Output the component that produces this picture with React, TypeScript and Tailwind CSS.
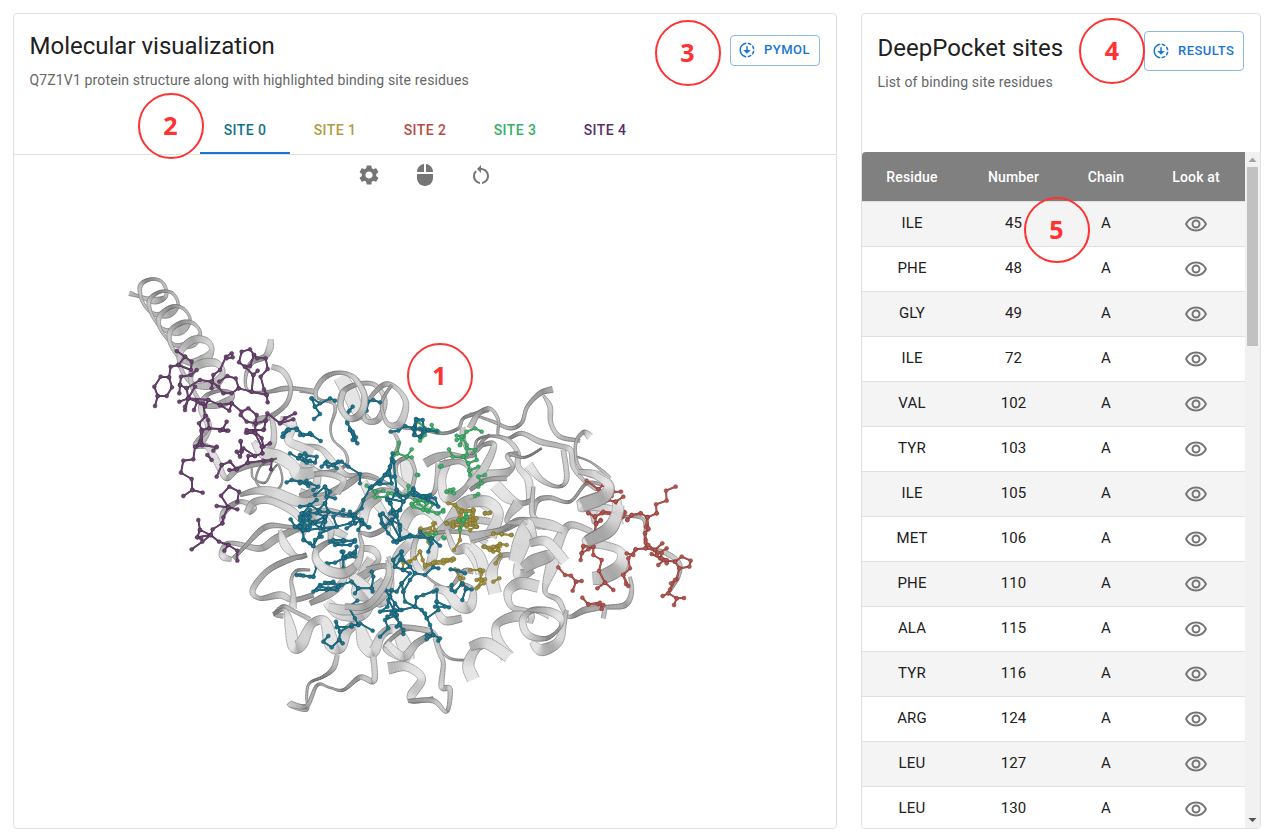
import React from "react";
import { MdSettings, MdMouse, MdRestartAlt, MdDownloading, MdOutlineRemoveRedEye } from "react-icons/md";

/* ---------- molecule data: coordinates are in thirds of a pixel from each tile's origin ---------- */
type Tile = { ox: number; oy: number; items: string[] };

// each item: "x y width, x y width, ..."
const ribbonTiles: Tile[] = [
  { ox: 300, oy: 340, items: [
    "120 110 40, 150 160 46, 175 215 34, 210 240 14",
    "0 150 14, 40 160 6, 60 178 5, 100 190 8, 105 215 8, 92 260 5, 100 300 5, 135 335 6, 140 372 8, 100 392 8, 50 390 8, 0 340 14",
    "50 180 8, 48 150 12, 75 112 14, 120 98 10, 165 115 14, 193 165 16, 185 220 20, 150 236 16, 122 200 16, 130 155 16, 175 132 12, 225 135 12, 254 180 14, 235 238 18, 195 240 12, 200 190 10, 250 135 14, 290 145 12, 318 190 16, 300 250 22, 262 250 12, 245 190 8, 275 135 8",
    "310 262 10, 370 270 8, 430 280 8, 475 265 8, 490 235 8, 530 220 10, 565 208 14",
    "280 275 8, 296 310 10, 280 350 8",
    "320 360 40, 325 400 42, 325 440 20, 290 410 14, 290 370 12, 325 355 10, 345 395 10, 335 450 12",
    "375 370 26, 410 352 24, 450 343 14, 490 350 12, 525 345 10",
    "415 370 14, 410 430 14, 395 465 10, 350 480 8, 310 450 8",
    "445 360 22, 425 420 24, 440 475 28, 490 450 16, 515 400 10, 480 365 14, 420 375 20",
    "488 262 14, 490 300 14, 515 340 8, 550 300 8, 570 285 8",
    "0 320 14, 60 325 14, 105 375 22, 140 405 14, 190 408 12, 250 425 10, 300 460 12",
    "0 455 20, 60 470 20, 130 440 22, 190 405 12, 235 415 8",
    "190 425 22, 215 470 30, 250 520 22, 262 575 22",
    "0 530 24, 80 515 22, 160 525 12, 200 475 14, 250 450 14, 330 470 10, 400 480 12",
    "190 550 22, 200 500 30, 240 470 20",
    "300 580 30, 330 520 34, 375 510 26, 420 550 22, 430 600 24",
    "430 580 30, 480 500 34, 530 480 34, 570 500 34",
    "400 600 24, 450 550 26, 520 540 20, 570 545 20",
    "0 370 14, 50 400 20, 40 450 22, 0 470 16",
    "0 415 12, 70 400 16, 130 420 18, 110 460 20",
    "0 580 30, 30 530 30, 80 560 26, 140 590 18",
  ]},
  { ox: 120, oy: 260, items: [
    "452 238 14, 450 262 20, 435 290 16, 395 308 14, 377 350 8, 385 392 6, 440 396 8, 490 386 14, 530 386 10, 580 394 14",
    "455 320 14, 490 335 16, 512 380 12, 500 430 12, 455 468 14, 415 482 22, 400 500 8",
    "455 470 12, 462 520 16, 455 560 18, 420 590 16",
    "480 480 20, 515 492 30, 505 540 24, 540 560 26, 580 575 24",
    "28 100 14, 60 110 8, 105 122 20, 138 108 10, 130 70 8, 98 57 8, 62 75 12, 66 122 8, 98 160 10, 145 162 22, 174 135 8, 158 100 8, 122 95 8, 88 120 12, 96 165 8, 130 208 10, 180 212 26, 210 180 8, 190 146 8, 155 140 10, 118 170 14, 124 212 8, 165 255 10, 215 250 26, 241 220 8, 220 190 10, 185 188 12, 150 215 14, 155 260 10, 195 305 12, 250 300 30, 275 270 14, 260 243 18, 220 240 22, 182 275 18, 185 330 10, 225 375 14, 285 370 28, 308 335 14, 285 308 22, 235 315 24, 212 350 14, 225 400 10, 260 438 12, 320 425 22, 338 400 8, 300 392 8, 255 410 12, 245 450 18, 266 500 18, 245 550 16",
  ]},
  { ox: 120, oy: 430, items: [
    "262 0 12, 225 45 12, 262 50 16, 288 90 20, 318 145 14, 350 120 16, 400 105 12, 450 100 8",
    "400 35 14, 430 68 34, 480 82 38, 520 110 34, 535 132 38, 580 128 32",
    "395 115 4, 400 145 4, 435 158 5, 455 125 4, 475 105 4, 487 150 4, 470 180 6, 430 178 5, 408 150 4, 425 105 4, 470 85 4",
    "305 275 12, 315 242 18, 360 215 12, 400 232 18, 385 250 12",
    "360 195 10, 410 182 20, 460 187 30, 510 207 32, 550 217 28, 610 210 26",
    "380 250 16, 400 218 20, 450 212 20, 520 245 22, 558 290 16",
    "335 388 12, 308 378 20, 315 345 12, 345 340 12, 420 355 18, 470 325 22, 545 290 16",
    "340 385 12, 370 355 10, 435 292 16, 500 290 10, 570 300 12",
    "480 300 10, 495 345 26, 530 380 14, 560 375 14",
    "560 375 8, 500 392 16, 440 425 16, 398 480 16, 420 505 12, 480 495 20, 520 510 14, 580 495 14",
    "570 420 6, 530 422 8, 514 450 8, 520 495 14, 518 535 22",
    "570 568 12, 525 545 10, 490 530 12, 464 553 8, 490 558 14",
  ]},
  { ox: 230, oy: 560, items: [
    "240 130 14, 300 100 22, 340 60 20, 335 0 12",
    "290 125 26, 330 160 36, 400 165 26, 430 100 30",
    "130 162 10, 165 150 10, 180 200 30, 192 258 36, 215 250 36, 245 192 24, 285 185 30, 305 250 44, 330 260 36, 350 215 30, 385 195 24, 405 250 44, 430 275 34, 455 225 24, 495 208 28, 525 260 42, 540 300 26",
    "322 285 12, 310 325 14, 280 350 8, 238 370 6, 230 410 6, 230 450 8, 180 432 18, 230 438 12, 262 375 8, 300 383 5, 340 390 8, 390 352 14, 432 362 16, 430 290 16",
    "540 300 18, 500 285 24, 465 260 12, 520 210 12, 570 208 14, 610 220 10",
    "475 325 34, 530 320 26, 575 355 24, 545 405 26, 550 425 10, 610 416 12",
    "430 0 40, 400 50 40, 380 100 30, 420 100 40, 460 60 20",
    "345 140 16, 400 140 20, 440 110 18, 475 50 18, 475 0 14",
  ]},
  { ox: 300, oy: 510, items: [
    "0 60 24, 50 20 30, 90 50 22, 90 95 12",
    "185 115 16, 220 120 20, 235 150 14, 200 190 22, 150 215 20",
    "150 190 20, 200 235 30, 240 280 24, 270 230 22, 260 170 14, 200 180 18",
    "270 180 16, 300 130 30, 330 90 24, 300 60 20",
    "50 110 14, 48 150 22, 80 180 28, 130 190 30, 170 165 22, 186 110 12, 180 70 8, 215 74 14, 260 48 12, 275 0 10",
    "50 120 20, 90 95 12, 130 105 10",
    "85 290 22, 130 300 30, 200 295 20, 255 250 18, 275 180 14, 265 140 10",
    "360 185 22, 340 140 16, 350 85 14, 385 60 12, 400 100 26, 395 150 26, 375 185 12",
    "400 70 10, 450 65 10, 510 70 14, 560 100 18",
    "440 60 12, 465 120 20, 500 115 30, 530 150 34, 545 190 34",
    "370 190 5, 410 222 6, 450 232 8, 490 185 14, 520 185 14",
    "400 235 20, 440 245 26, 475 285 34, 510 290 30, 518 240 16, 480 220 10",
    "410 300 16, 435 332 24, 485 325 20",
    "300 350 12, 350 355 14, 400 370 16, 420 415 8, 450 445 6, 500 450 6, 520 440 14",
    "520 508 38, 505 465 34, 530 415 24, 575 395 20",
    "405 385 12, 420 430 14, 430 462 12, 425 530 16, 450 538 14, 440 605 10, 400 572 14, 325 573 10",
    "260 400 20, 310 440 26, 350 400 20, 400 370 14",
  ]},
  { ox: 470, oy: 370, items: [
    "248 58 18, 210 70 14, 172 110 10, 155 158 10, 120 175 10, 70 155 8, 0 130 4",
    "220 76 6, 240 110 14, 243 160 12, 270 200 12, 330 212 10",
    "0 175 18, 25 132 14, 60 116 10, 85 150 8, 85 195 6, 115 205 8, 155 190 12, 210 215 16, 270 228 14, 303 242 16, 310 290 14, 340 330 10, 380 360 8",
    "360 200 22, 340 187 12, 317 220 8, 322 280 8, 350 312 10, 400 325 8",
    "320 260 4, 360 275 4, 400 305 8, 420 325 10",
    "15 245 8, 22 210 6, 60 198 6, 110 208 12, 142 245 14, 145 290 16, 175 330 22, 180 392 20",
    "145 250 10, 112 258 12, 128 292 12, 85 315 32, 10 310 24",
    "0 350 30, 45 290 24, 72 225 16, 40 225 10, 20 245 8",
    "175 285 28, 215 330 16, 265 350 8, 290 325 14, 280 240 14",
    "75 345 36, 110 380 34, 150 400 16, 185 392 14",
    "120 252 8, 165 262 6, 215 235 5",
    "188 450 10, 200 395 14, 240 383 12, 300 395 8, 350 340 8, 400 345 8",
    "190 350 10, 187 430 14, 210 468 18, 160 452 20, 100 480 14, 0 510 26",
    "0 400 24, 50 395 34, 85 430 30, 60 500 38",
    "0 360 10, 50 330 12, 110 325 14",
  ]},
  { ox: 470, oy: 510, items: [
    "450 20 6, 520 28 8, 530 105 6, 590 130 14, 628 160 12, 625 200 10, 600 240 10",
    "185 -20 14, 190 20 14, 225 50 18, 150 30 16, 90 60 14, 0 80 26",
    "480 200 8, 485 245 12, 465 285 16, 405 292 12, 345 300 18, 295 320 10, 265 270 16, 225 245 12, 245 170 36, 265 95 30, 300 45 20, 365 65 16",
    "0 105 20, 30 140 30, 45 195 34",
    "75 250 38, 65 190 34, 90 140 16, 130 135 12",
    "150 160 34, 150 195 34, 190 180 18",
    "145 -20 34, 110 35 10, 180 35 24, 240 45 30, 280 60 20",
    "135 155 38, 155 95 50, 175 40 30, 200 100 10",
    "160 175 30, 190 155 40, 240 135 34, 250 110 10",
    "180 100 20, 230 95 28, 285 155 30",
    "205 230 34, 150 220 34, 115 245 26, 125 290 16, 180 310 20, 180 340 14",
    "112 440 42, 85 395 30, 80 345 22, 130 320 30, 170 320 30",
    "405 295 12, 400 325 12",
    "185 395 16, 215 420 34, 265 395 26, 280 340 18, 290 300 10",
    "240 310 34, 190 300 16, 158 330 20, 175 375 20, 230 385 12, 272 350 8, 268 320 24, 230 302 20, 180 300 10",
    "0 410 24, 50 400 34, 115 440 34",
    "370 -15 30, 372 40 10",
    "440 -30 26, 440 15 32, 415 60 42, 350 95 30, 400 105 24, 452 125 24, 450 170 42, 400 200 42, 368 205 36",
  ]},
  { ox: 470, oy: 370, items: [
    "325 305 14, 380 315 24, 418 345 26, 400 380 40, 336 405 40, 380 410 24, 430 425 28, 440 465 40",
  ]},
];

// each item: chain of atoms "x y x y ..."; every vertex is an atom
type Mol = { color: string; dark: string; tiles: Tile[] };
const purple: Mol = { color: "#6b4270", dark: "#452a4b", tiles: [
  { ox: 120, oy: 260, items: [
    "105 438 113 408 103 380 122 350 147 352 156 382 140 408 113 408", "147 352 152 320 175 315 195 290 170 273", "175 315 213 330 215 305 195 290",
    "180 375 183 350 213 345 230 330", "178 400 180 375 200 385 240 360 275 365", "275 385 280 345 300 330 318 290 335 280 338 292 320 295",
    "275 365 295 380 310 400 335 400 356 385 347 355 322 348 298 365", "356 385 395 395 440 405 443 427", "395 395 400 345 375 320 357 307 365 275 390 268 402 285 390 318 375 320", "402 285 412 295 437 295 443 327 422 350 432 388 440 405", "400 345 413 332",
    "195 450 205 415 178 425", "205 415 200 385", "205 415 232 425 222 450", "195 440 205 415 225 380", "205 415 265 420 300 435 335 430 365 455 385 445 410 465 407 490 380 485 362 465", "300 435 328 452 335 430",
    "265 420 255 440 242 430", "258 468 237 490 245 510 267 505 264 480", "267 505 308 508 320 485", "308 508 320 512", "245 510 240 545 228 560", "255 468 250 430",
    "407 490 405 515 382 518", "405 515 425 535 430 560 450 550", "407 490 437 482 432 508", "437 482 442 460 480 490 495 475 525 460", "480 490 520 478", "362 545 365 570", "290 560 280 572",
  ]},
  { ox: 120, oy: 430, items: [
    "245 5 247 45 225 50 220 88 190 92 183 128 215 147 217 180 190 198", "217 180 248 188", "247 45 290 52", "300 2 325 2", "378 8 405 10 425 50 427 70", "380 0 430 0",
    "362 33 365 65 350 65 360 80 370 55 405 78 427 70", "328 120 350 118 383 98 385 78 405 78", "305 105 330 95 350 118", "290 140 305 105", "275 90 262 75", "383 98 430 92 455 90 453 118",
    "352 215 357 185 328 170 303 197 325 232 352 238", "325 232 310 262 307 280", "325 232 290 228", "307 280 278 298 272 315 240 300 235 270", "240 300 232 322 272 315 247 335 215 358", "272 315 297 335 325 345 352 362 352 392", "325 345 313 362", "232 322 243 325",
  ]},
]};
const teal: Mol = { color: "#20748c", dark: "#0f4c60", tiles: [
  { ox: 300, oy: 340, items: [
    "35 175 45 200 60 222 42 237", "35 175 60 190", "45 200 90 175 105 182", "142 220 158 200 148 212", "200 212 205 185 220 180 240 187", "142 245 150 270 165 300 172 310", "150 270 160 282 158 300", "142 250 158 275 168 292", "0 285 35 285 62 303",
    "272 275 295 272 315 258 340 265 362 268 385 270", "340 265 348 237 368 240 372 268 360 290 342 285 340 265", "360 290 385 270 410 275", "350 240 345 285",
    "0 345 15 360 45 368 50 350 20 348", "65 380 80 365 100 375 125 365 145 380 180 402 180 430", "100 375 110 385", "75 370 85 380 115 365",
    "0 425 30 430 55 440 40 450", "0 430 20 422", "45 465 75 440 80 470 105 475", "75 440 90 455 75 490 55 510 30 495 10 520 40 550 75 545 85 515 75 490", "0 500 30 495 50 480", "0 560 40 550 70 570 75 545", "20 570 10 520", "60 515 85 515 130 525 160 525 185 505 190 480 210 445", "150 515 165 550 185 540 160 525", "165 550 140 565", "185 540 205 562",
    "278 340 270 380 255 405 235 430 215 440", "278 360 268 400 275 430 240 432 255 405 270 380", "282 365 285 410 290 450 270 490 262 475 310 485 340 450 370 470 405 475 415 500 385 480 340 465", "215 440 255 405 275 410", "290 450 300 470 310 485 300 510 280 515 272 490 262 480", "300 510 275 540 300 555 300 570", "340 445 320 470 295 465", "240 525 245 550", "255 560 275 540", "340 450 345 465 390 465",
  ]},
  { ox: 120, oy: 260, items: ["490 530 505 508 530 505 550 525 570 520", "490 520 500 512"] },
  { ox: 120, oy: 430, items: ["487 20 507 0", "530 0 550 15 570 10", "510 70 535 85 555 70", "535 85 560 98 570 92", "500 157 515 150 545 157 565 168", "512 268 525 290 548 302 552 330 570 340", "548 302 550 265 570 275", "545 250 570 260", "525 290 545 280 570 290", "530 435 550 437 570 440"] },
  { ox: 300, oy: 510, items: [
    "0 20 25 10 30 0", "0 50 25 60 60 55 75 20 50 10 25 10", "0 30 45 35 75 20", "10 60 10 90 40 108 45 90 65 80", "40 108 60 70 110 50 100 20 130 0", "60 55 110 50 150 40 165 25 145 15", "165 15 185 42 208 52", "185 42 175 60",
    "90 95 110 100 130 95 165 90", "100 90 130 90 165 95 150 105 105 105", "125 125 135 145 165 130 170 110", "130 140 150 130 165 125", "130 125 130 175", "80 160 105 158 130 145 165 140", "40 200 50 170 85 162", "0 195 40 200",
    "40 245 60 225 85 220 120 225 155 215 175 235 215 235 220 200 215 185", "50 240 80 240 110 240 125 225", "60 230 85 235 115 230 100 215 75 218", "175 235 165 250", "215 235 218 245",
    "145 290 172 272", "145 290 165 325 175 345", "155 350 110 352 108 335 120 365 118 390 95 412 70 395 85 378", "118 390 128 400", "120 365 155 345 175 345", "218 362 180 340",
    "242 15 250 45 265 70 290 97 300 85 275 40 248 10", "270 10 290 20 300 50 300 85 330 75 360 80", "270 40 290 15 278 0", "300 85 280 95", "290 97 330 80 395 85", "360 65 395 100 385 125", "395 85 420 107", "280 150 305 125 310 150 330 170 345 190 375 195 400 172 415 175", "280 150 285 170 310 180 330 170", "310 180 330 190 305 220 310 245 330 210 345 190", "305 125 300 150 285 170",
    "255 240 270 260 262 290 240 305 285 300 305 300 345 290 350 262 410 240 410 275 415 300 380 325 365 300 345 290", "275 240 265 270 290 315 255 330 265 355 240 380", "290 315 298 345 310 360 310 372", "285 280 275 310 300 340 290 350 298 345", "305 220 290 245 255 240", "310 245 315 275 345 290", "270 260 300 300 262 320", "350 262 370 255 400 245", "410 275 447 292", "375 310 390 345 400 375 380 388", "380 375 400 375 420 385 415 392", "405 290 435 290",
    "452 178 475 182 495 190", "455 225 455 240 465 245 487 220", "487 270 497 238 515 238", "487 220 500 235",
  ]},
]};
const green: Mol = { color: "#43b06c", dark: "#287a48", tiles: [
  { ox: 300, oy: 340, items: [
    "355 245 375 265 395 270 410 272", "360 302 375 285 360 265", "395 255 400 270 415 275", "297 308 292 340 275 355", "292 340 320 350 335 328", "320 350 335 352", "355 405 350 405", "420 380 425 378",
    "470 287 490 290 500 275 525 265 545 275", "480 315 490 290 470 300", "480 315 485 290 500 315 500 345 490 350 505 370 530 360 525 330 500 325", "447 328 458 350 490 350", "505 370 508 392 535 380", "508 392 510 405", "555 405 535 410 545 430 535 440", "525 468 535 462", "440 455 462 460 450 450", "440 455 460 448",
    "200 437 225 455 225 472 260 470 265 460 285 465", "225 455 250 452", "275 460 300 465 325 465 325 438", "335 492 360 480 380 490 370 510 340 500 335 492", "345 480 370 480 400 492 385 515", "355 490 380 510 415 520 430 510", "475 540 490 545 500 530 480 570", "330 460 370 470 380 490",
  ]},
  { ox: 300, oy: 510, items: ["380 0 410 10 430 5", "390 100 408 70 380 75", "433 85 430 82", "490 30 498 12"] },
]};
const olive: Mol = { color: "#a09243", dark: "#706526", tiles: [
  { ox: 300, oy: 340, items: [
    "445 490 465 495 485 510 520 510 515 535 485 540 485 515", "440 550 460 545 485 550 520 550 530 560", "460 560 470 545 500 560 525 540", "465 495 485 540", "360 568 390 565 405 550", "555 520 570 518",
  ]},
  { ox: 300, oy: 510, items: [
    "362 55 365 75 405 60 400 40", "365 75 390 75 385 95", "440 40 470 35 485 5 520 5 520 30 490 30 480 55 480 90 462 120", "440 40 460 50 500 45 530 50", "485 45 530 25", "360 125 368 150 375 170 400 162 430 160 455 152", "375 165 405 155 440 150 462 148", "400 158 430 150 460 145", "308 178 310 158 330 155", "360 125 345 145 325 155", "465 178 480 205 490 205", "480 205 485 225", "550 110 565 115",
  ]},
  { ox: 470, oy: 370, items: ["45 430 60 428", "70 490 95 493 125 495", "0 460 20 470 5 445 10 420"] },
  { ox: 470, oy: 510, items: ["0 30 18 50 0 60", "0 20 10 0 15 40", "45 10 55 10", "70 72 95 72 123 75", "45 110 70 110 90 102 110 105", "45 110 70 125 85 120 90 102", "60 120 90 108", "85 120 92 135 77 160", "70 215 88 205", "0 180 30 180 40 182 30 208 42 220 25 230", "30 180 35 210 20 235", "20 210 45 208"] },
]};
const red: Mol = { color: "#b5544e", dark: "#7d3632", tiles: [
  { ox: 470, oy: 370, items: [
    "350 332 385 358 400 345", "385 358 425 378 430 365 453 365", "415 390 437 395 460 380", "437 395 440 415 445 430 462 425 457 442 445 435", "440 425 455 435 465 428", "355 430 375 440 378 460 392 450", "378 460 375 488", "375 440 395 430 425 432", "472 450 485 435 512 430 532 442 560 430 558 403 590 392 588 362 617 350", "532 442 535 478 525 490 527 510", "532 442 528 470",
  ]},
  { ox: 470, oy: 510, items: [
    "355 8 375 20 378 42 392 32", "378 42 372 75 370 110 370 135 395 150 387 183 405 218 382 235", "405 218 430 240", "375 20 400 5 440 10 460 15 445 5", "472 30 485 15 512 10 532 22 560 10", "532 22 535 55 525 70 527 98 527 115 555 120 577 100", "535 105 555 120 560 135 590 115", "555 120 575 130 572 145 545 132", "527 115 497 118 490 135 470 130", "497 118 475 145 480 175 460 195 468 222", "460 195 475 228",
    "340 110 335 130 332 150", "335 130 355 118 370 110", "340 108 370 110", "265 172 285 195 303 197 318 215 335 213", "318 215 308 242", "337 263 355 283 385 282 400 285", "355 283 390 278 395 297",
    "565 165 582 150 590 155 570 145", "582 150 615 155 635 140 662 152 658 170 628 175 615 155", "628 175 620 208 603 220 615 210 600 240 595 250 578 258", "595 250 620 265 642 264", "620 265 612 285", "575 145 590 150 590 160",
  ]},
]};
const molecules = [purple, olive, green, teal, red];

/* ---------- ribbon geometry ---------- */
type P = [number, number, number];
const STEPS = 8;

function sample(item: string, ox: number, oy: number): P[] {
  const pts = item.split(",").map((s) => {
    const [x, y, w] = s.trim().split(" ").map(Number);
    return [ox + x / 3, oy + y / 3, w / 3] as P;
  });
  const out: P[] = [];
  for (let i = 0; i < pts.length - 1; i++) {
    const a = pts[Math.max(0, i - 1)], b = pts[i], c = pts[i + 1], d = pts[Math.min(pts.length - 1, i + 2)];
    for (let s = 0; s < STEPS; s++) {
      const t = s / STEPS;
      const q = [0, 1, 2].map((k) =>
        0.5 * (2 * b[k] + (c[k] - a[k]) * t + (2 * a[k] - 5 * b[k] + 4 * c[k] - d[k]) * t * t + (3 * b[k] - a[k] - 3 * c[k] + d[k]) * t * t * t));
      out.push([q[0], q[1], Math.max(1.1, q[2])]);
    }
  }
  out.push(pts[pts.length - 1]);
  return out;
}

function Ribbon({ item, ox, oy }: { item: string; ox: number; oy: number }) {
  const p = sample(item, ox, oy);
  const edge = p.map((q, i) => {
    const a = p[Math.max(0, i - 1)], b = p[Math.min(p.length - 1, i + 1)];
    const dx = b[0] - a[0], dy = b[1] - a[1], len = Math.hypot(dx, dy) || 1;
    const nx = (-dy / len) * q[2] / 2, ny = (dx / len) * q[2] / 2;
    // surfaces running down-right or straight down face the light; edge-on stretches go dark
    const light = Math.abs((dx / len) * 0.45 + (dy / len) * 0.89);
    const v = Math.round(Math.min(228, 104 + 62 * Math.min(1, q[2] / 8) + 68 * light));
    return { l: [q[0] + nx, q[1] + ny], r: [q[0] - nx, q[1] - ny], v };
  });
  const f = (n: number[]) => n[0].toFixed(1) + " " + n[1].toFixed(1);
  return (
    <g>
      {edge.slice(1).map((e, i) => {
        const o = edge[i];
        const c = `rgb(${e.v},${e.v},${e.v})`;
        const k = Math.round(e.v * 0.58);
        return (
          <g key={i}>
            <path d={`M${f(o.l)}L${f(e.l)}L${f(e.r)}L${f(o.r)}Z`} fill={c} stroke={c} strokeWidth={0.5} />
            <path d={`M${f(o.l)}L${f(e.l)}M${f(o.r)}L${f(e.r)}`} stroke={`rgb(${k},${k},${k})`} strokeWidth={0.6} fill="none" />
          </g>
        );
      })}
    </g>
  );
}

function Molecule({ mol }: { mol: Mol }) {
  const bonds: string[] = [];
  const atoms: [number, number][] = [];
  mol.tiles.forEach((t) => t.items.forEach((s) => {
    const n = s.split(" ").map(Number);
    let d = "";
    for (let i = 0; i < n.length; i += 2) {
      const x = t.ox + n[i] / 3, y = t.oy + n[i + 1] / 3;
      d += (i ? "L" : "M") + x.toFixed(1) + " " + y.toFixed(1);
      atoms.push([x, y]);
    }
    bonds.push(d);
  }));
  const all = bonds.join("");
  return (
    <g fill="none" strokeLinejoin="round">
      <path d={all} stroke={mol.dark} strokeWidth={1.9} />
      <path d={all} stroke={mol.color} strokeWidth={1.3} />
      {atoms.map(([x, y], i) => (
        <circle key={i} cx={x} cy={y} r={1.95} fill={mol.color} stroke={mol.dark} strokeWidth={0.5} />
      ))}
    </g>
  );
}

function Protein() {
  return (
    <svg className="block" width="640" height="460" viewBox="100 260 640 460">
      {ribbonTiles.map((t, k) => (
        <g key={k}>{t.items.map((s, i) => <Ribbon key={i} item={s} ox={t.ox} oy={t.oy} />)}</g>
      ))}
      {molecules.map((m, i) => <Molecule key={i} mol={m} />)}
      <Ribbon item="345 140 16, 400 140 20, 440 110 18, 475 50 18, 475 10 14" ox={230} oy={560} />
      <Ribbon item="48 120 14, 50 150 22, 80 180 28, 130 190 28, 165 168 20" ox={300} oy={510} />
      <Ribbon item="165 115 14, 193 165 16, 185 215 20, 150 236 16, 122 200 16, 130 155 16" ox={300} oy={340} />
      <Ribbon item="375 315 20, 416 345 26, 400 380 40, 336 405 40" ox={470} oy={370} />
      <Ribbon item="445 -15 34, 440 15 34, 415 60 42, 350 95 32" ox={470} oy={510} />
    </svg>
  );
}

/* ---------- page ---------- */
const tabs = [
  ["SITE 0", "text-[#12718a]"],
  ["SITE 1", "text-[#ae9b45]"],
  ["SITE 2", "text-[#b84a43]"],
  ["SITE 3", "text-[#35b265]"],
  ["SITE 4", "text-[#57306b]"],
];
const rows: [string, number][] = [
  ["ILE", 45], ["PHE", 48], ["GLY", 49], ["ILE", 72], ["VAL", 102], ["TYR", 103], ["ILE", 105],
  ["MET", 106], ["PHE", 110], ["ALA", 115], ["TYR", 116], ["ARG", 124], ["LEU", 127], ["LEU", 130],
];

function Marker({ n, place }: { n: number; place: string }) {
  return (
    <div className={`absolute flex size-[66px] items-center justify-center rounded-full border-2 border-[#ff3131] font-['Open_Sans',sans-serif] text-[25px] font-bold text-[#ff3131] ${place}`}>
      {n}
    </div>
  );
}

function Action({ label, size }: { label: string; size: string }) {
  return (
    <button className={`flex items-center rounded border border-[#8cbae8] pl-[7px] text-[13px] font-medium tracking-[0.46px] text-[#1976d2] ${size}`}>
      <MdDownloading className="mr-2 size-[18px]" />
      {label}
    </button>
  );
}

const cols = "grid grid-cols-[100px_103px_82px_98px] items-center text-center";

export default function App() {
  return (
    <div className="relative flex h-[838px] w-[1269px] gap-6 overflow-hidden bg-white pt-[13px] pl-[13px] font-[Roboto,sans-serif] text-[#212121]">
      <section className="flex h-[816px] w-[824px] flex-col rounded border border-[#e0e0e0]">
        <header className="flex h-[92px] items-start justify-between pr-4 pl-[15.5px]">
          <div>
            <h1 className="mt-4 text-[24px] leading-8">Molecular visualization</h1>
            <p className="mt-2 text-[14px] leading-5 tracking-[0.15px] text-[#666]">Q7Z1V1 protein structure along with highlighted binding site residues</p>
          </div>
          <div className="mt-[21px]"><Action label="PYMOL" size="h-[31px] w-[90px] pb-[1px]" /></div>
        </header>
        <nav className="flex h-[49px] justify-center border-b border-[#e0e0e0]">
          {tabs.map(([t, c], i) => (
            <div key={t} className={`flex w-[90px] items-center justify-center text-[14px] font-medium tracking-[0.4px] ${c} ${i === 0 ? "border-b-2 border-[#1976d2] pt-[2px]" : ""}`}>{t}</div>
          ))}
        </nav>
        <div className="flex h-10 items-center justify-center gap-8 pr-[1px] text-[#757575]">
          <MdSettings size={24} />
          <MdMouse size={24} />
          <MdRestartAlt size={24} />
        </div>
        <div className="pt-[65px] pl-[86px]"><Protein /></div>
      </section>

      <section className="flex h-[816px] w-[400px] flex-col overflow-hidden rounded border border-[#e0e0e0]">
        <header className="flex h-[138px] shrink-0 items-start justify-between pr-4 pl-[15.5px]">
          <div>
            <h2 className="mt-[18px] text-[24px] leading-8">DeepPocket sites</h2>
            <p className="mt-2 text-[14px] leading-5 tracking-[0.15px] text-[#666]">List of binding site residues</p>
          </div>
          <div className="mt-[17px]"><Action label="RESULTS" size="h-[40px] w-[100px]" /></div>
        </header>
        <div className="flex min-h-0 flex-1">
          <div className="w-[383px] overflow-hidden">
            <div className={`h-[50px] rounded-tl border-b border-[#e0e0e0] bg-[#808080] pt-[2px] text-[14px] font-medium tracking-[0.15px] text-white ${cols}`}>
              <span>Residue</span><span>Number</span><span>Chain</span><span>Look at</span>
            </div>
            {rows.map(([r, n], i) => (
              <div key={n} className={`h-[45px] border-b border-[#e0e0e0] pb-[2px] text-[15px] tracking-[0.15px] ${i % 2 ? "bg-white" : "bg-[#f4f4f4]"} ${cols}`}>
                <span>{r}</span><span>{n}</span><span>A</span>
                <MdOutlineRemoveRedEye className="mx-auto mt-[2px] size-6 text-[#757575]" />
              </div>
            ))}
          </div>
          <div className="flex w-[15px] flex-col items-center justify-between bg-[#f1f1f1]">
            <div className="flex flex-col items-center">
              <svg width="15" height="15"><path d="M3.5 10L7.5 5.5L11.5 10Z" fill="#a3a3a3" /></svg>
              <div className="h-[179px] w-[11px] bg-[#c1c1c1]" />
            </div>
            <svg width="15" height="15"><path d="M3.5 5L7.5 9L11.5 5Z" fill="#505050" /></svg>
          </div>
        </div>
      </section>

      <Marker n={1} place="left-[406.5px] top-[343px]" />
      <Marker n={2} place="left-[137.5px] top-[93px]" />
      <Marker n={3} place="left-[654.5px] top-[19.5px]" />
      <Marker n={4} place="left-[1079px] top-[18px]" />
      <Marker n={5} place="left-[1023.5px] top-[196.5px]" />
    </div>
  );
}
